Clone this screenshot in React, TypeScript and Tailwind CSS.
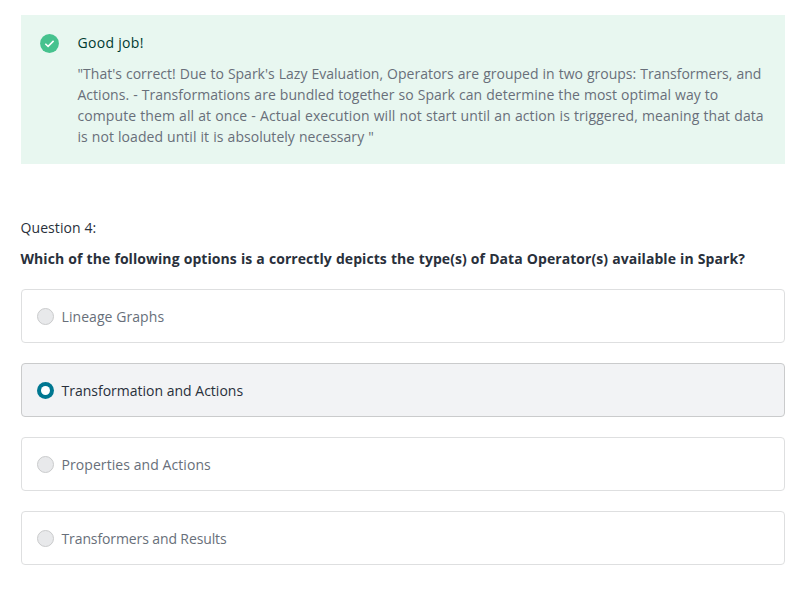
const options = [
  { label: "Lineage Graphs", spacing: "tracking-[0.07px]" },
  { label: "Transformation and Actions", spacing: "tracking-[0px]", selected: true },
  { label: "Properties and Actions", spacing: "tracking-[0.07px]" },
  { label: "Transformers and Results", spacing: "tracking-[-0.11px]" },
];

const feedback = [
  { text: "\"That's correct! Due to Spark's Lazy Evaluation, Operators are grouped in two groups: Transformers, and", spacing: "tracking-[0px]" },
  { text: "Actions. - Transformations are bundled together so Spark can determine the most optimal way to", spacing: "tracking-[0.02px]" },
  { text: "compute them all at once - Actual execution will not start until an action is triggered, meaning that data", spacing: "tracking-[0.077px]" },
  { text: "is not loaded until it is absolutely necessary \"", spacing: "tracking-[0.037px]" },
];

export default function App() {
  return (
    <main className="h-[594px] bg-white pt-[15px] pr-[27px] pl-[21px] font-['Open_Sans','Noto_Sans',sans-serif] text-[14px] leading-[21px] whitespace-nowrap text-[#29303b]">
      <section className="flex h-[149px] bg-[#e8f7f0] pt-[17px] pl-[19px]">
        <svg className="mt-[2px] mr-[18.5px] h-[19px] w-[19px] shrink-0" viewBox="0 0 19 19">
          <circle cx="9.5" cy="9.5" r="9.4" fill="#46c28e" />
          <path d="M5.3 9.7 8.1 12.4 13.6 6.9" fill="none" stroke="white" strokeWidth="1.5" />
        </svg>
        <div>
          <p className="tracking-[0.3px] text-[#003b30]">Good job!</p>
          <div className="mt-[10px] text-[#686f7a] [word-spacing:0.4px]">
            {feedback.map((line) => <p key={line.text} className={line.spacing}>{line.text}</p>)}
          </div>
        </div>
      </section>
      <p className="mt-[53px] -ml-[0.5px] tracking-[0.09px]">Question 4:</p>
      <h1 className="mt-[10px] -ml-[0.5px] font-bold tracking-[0.058px] [word-spacing:0.4px]">Which of the following options is a correctly depicts the type(s) of Data Operator(s) available in Spark?</h1>
      <div className="mt-[20px] flex flex-col gap-5">
        {options.map((option) => (
          <div key={option.label} className={"flex h-[54px] items-center rounded-[4px] border pl-[15px] " + (option.selected ? "border-[#cacbcc] bg-[#f2f3f5]" : "border-[#dedfe0] text-[#686f7a]")}>
            <span className={"mr-[7.5px] flex h-[17px] w-[17px] items-center justify-center rounded-full " + (option.selected ? "bg-[#007791]" : "border border-[#cacbcc] bg-[#e8e9eb]")}>
              {option.selected && <span className="h-[9px] w-[9px] rounded-full bg-white" />}
            </span>
            <span className={option.spacing}>{option.label}</span>
          </div>
        ))}
      </div>
    </main>
  );
}
